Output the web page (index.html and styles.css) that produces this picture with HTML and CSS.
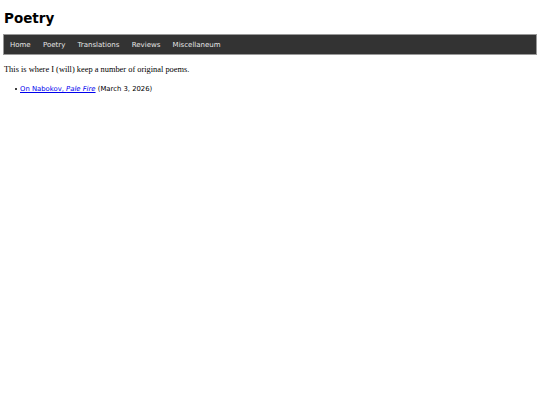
FILE: index.html
```html
<!DOCTYPE html>
<html>
<head>
<meta charset="utf-8">
<title>Poetry</title>
<link rel="stylesheet" href="styles.css">
</head>
<body>
<h1 class="title">Poetry</h1>
<nav class="nav">
  <a href="#">Home</a>
  <a href="#">Poetry</a>
  <a href="#">Translations</a>
  <a href="#">Reviews</a>
  <a href="#">Miscellaneum</a>
</nav>
<p class="intro">This is where I (will) keep a number of original poems.</p>
<ul class="list">
  <li><a href="#">On Nabokov, <em>Pale Fire</em></a> (March 3, 2026)</li>
</ul>
</body>
</html>
```
FILE: styles.css
```css
body {
  margin: 3px;
  font-family: "Liberation Serif", serif;
  background: #fff;
  color: #000;
}
.title {
  font-family: "DejaVu Sans", sans-serif;
  font-weight: bold;
  font-size: 13.5px;
  margin: 7px 1px 8px;
  line-height: 16px;
}
.nav {
  display: flex;
  background: #333;
  border: 1px solid #999;
  height: 19px;
  align-items: center;
  padding-left: 6px;
  gap: 12.3px;
}
.nav a {
  font-family: "DejaVu Sans", sans-serif;
  font-size: 7px;
  color: #e6e6e6;
  text-decoration: none;
  padding-top: 1px;
}
.intro {
  font-size: 8.4px;
  margin: 10px 1px 11px;
}
.list {
  font-family: "DejaVu Sans", sans-serif;
  font-size: 6.85px;
  margin: 0;
  padding-left: 17px;
  list-style: none;
}
.list li::before {
  content: "";
  display: inline-block;
  width: 2px;
  height: 2px;
  border-radius: 50%;
  background: #000;
  margin-left: -5px;
  margin-right: 3px;
  vertical-align: 1.5px;
}
.list a {
  color: #0000ee;
}
```
